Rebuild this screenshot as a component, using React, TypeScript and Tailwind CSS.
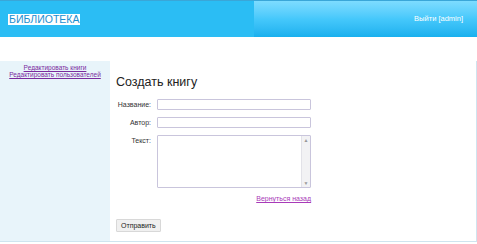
import React from "react";

function Field({ label, children }: { label: string; children: React.ReactNode }) {
  return (
    <div className="flex items-start">
      <span className="w-[35px] flex justify-end whitespace-nowrap text-[7px] leading-[11px] text-[#333] mr-[6px]">{label}</span>
      {children}
    </div>
  );
}

export default function App() {
  return (
    <div className="w-[477px] h-[244px] bg-white overflow-hidden" style={{ fontFamily: "'Liberation Sans', Arial, sans-serif" }}>
      {/* Header */}
      <header className="flex h-[37px] border-t border-[#3aa6d8]">
        <div className="w-[254px] bg-[#2bbdf4] pl-[8px] pt-[5px]">
          <span className="inline-block bg-white px-[1px] text-[10.5px] leading-[11px] text-[#1c8fd0]">
            БИБЛИОТЕКА
          </span>
        </div>
        <div className="flex-1 flex items-center justify-end pr-[14px] bg-gradient-to-b from-[#7ddcff] via-[#45c8fb] to-[#18b0ee]">
          <span className="text-[7.5px] text-white">Выйти [admin]</span>
        </div>
      </header>

      {/* Body */}
      <div className="flex mt-[24px] h-[181px] border-r border-b border-[#cfe4ef]">
        <aside className="w-[110px] bg-[#e8f4fa] pt-[3px] flex flex-col items-center text-[6.5px] leading-[7px] whitespace-nowrap">
          <a href="#" className="text-[#7b2a9e] underline">Редактировать книги</a>
          <a href="#" className="text-[#7b2a9e] underline">Редактировать пользователей</a>
        </aside>
        <main className="flex-1 pl-[6px] pt-[13px] text-[7px] leading-[10px]">
          <h1 className="text-[12.5px] leading-[16px] text-[#222] mb-[9px]">Создать книгу</h1>
          <div className="w-[195px] flex flex-col gap-[7px]">
            <Field label="Название:">
              <input className="w-[154px] h-[11px] border border-[#c9c5dc] rounded-[1px]" />
            </Field>
            <Field label="Автор:">
              <input className="w-[154px] h-[11px] border border-[#c9c5dc] rounded-[1px]" />
            </Field>
            <Field label="Текст:">
              <div className="w-[154px] h-[53px] border border-[#c9c5dc] rounded-[1px] flex justify-end">
                <div className="w-[9px] bg-[#f2f2f4] border-l border-[#e2e2e8] flex flex-col justify-between items-center text-[5px] text-[#999] leading-[8px]">
                  <span>▲</span>
                  <span>▼</span>
                </div>
              </div>
            </Field>
          </div>
          <div className="w-[195px] text-right mt-[6px]">
            <a href="#" className="text-[7px] text-[#a83ab8] underline">Вернуться назад</a>
          </div>
          <button className="mt-[15px] h-[13px] px-[4px] text-[7px] leading-[10px] text-[#222] bg-[#f0f0f0] border border-[#d8d8d8] rounded-[1px]">
            Отправить
          </button>
        </main>
      </div>
    </div>
  );
}
